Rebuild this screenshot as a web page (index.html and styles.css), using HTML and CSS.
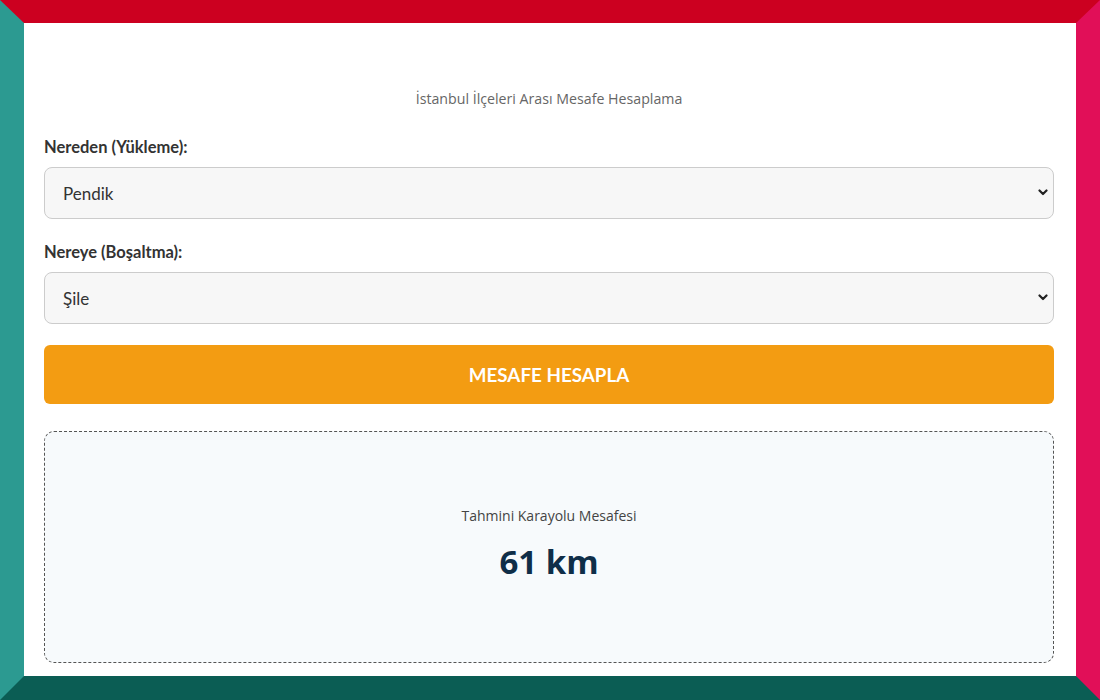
FILE: index.html
```html
<!DOCTYPE html>
<html lang="tr">
<head>
<meta charset="utf-8">
<title>İstanbul İlçeleri Arası Mesafe Hesaplama</title>
<link rel="stylesheet" href="styles.css">
</head>
<body>
<div class="frame">
  <div class="card">
    <p class="title">İstanbul İlçeleri Arası Mesafe Hesaplama</p>

    <label class="label" for="from">Nereden (Yükleme):</label>
    <div class="select-wrap">
      <select id="from" class="select">
        <option>Pendik</option>
      </select>
      <svg class="chevron" width="10" height="7" viewBox="0 0 10 7"><path d="M1.5 1.5 L5 5 L8.5 1.5" fill="none" stroke="#222" stroke-width="2.2" stroke-linecap="round" stroke-linejoin="round"/></svg>
    </div>

    <label class="label second" for="to">Nereye (Boşaltma):</label>
    <div class="select-wrap">
      <select id="to" class="select">
        <option>Şile</option>
      </select>
      <svg class="chevron" width="10" height="7" viewBox="0 0 10 7"><path d="M1.5 1.5 L5 5 L8.5 1.5" fill="none" stroke="#222" stroke-width="2.2" stroke-linecap="round" stroke-linejoin="round"/></svg>
    </div>

    <button class="btn" type="button">MESAFE HESAPLA</button>

    <div class="result">
      <div class="result-label">Tahmini Karayolu Mesafesi</div>
      <div class="result-value">61 km</div>
    </div>
  </div>
</div>
</body>
</html>
```

FILE: styles.css
```css
* { box-sizing: border-box; }
html, body { margin: 0; padding: 0; }
body { background: #fff; }

.frame {
  width: 1100px;
  height: 700px;
  border-top: 23px solid #cc0020;
  border-left: 24px solid #2c9a91;
  border-right: 24px solid #e10f58;
  border-bottom: 24px solid #0b5d54;
  background: #fff;
}

.card {
  height: 100%;
  padding: 66px 22px 13px 20px;
  display: flex;
  flex-direction: column;
}

.title {
  margin: 0;
  text-align: center;
  font-family: "Open Sans", sans-serif;
  font-size: 14.2px;
  line-height: 20px;
  color: #666;
}

.label {
  display: block;
  margin-top: 28px;
  margin-bottom: 10px;
  font-family: Lato, sans-serif;
  font-weight: 700;
  font-size: 16.5px;
  line-height: 20px;
  color: #333;
}
.label.second { margin-top: 23px; }

.select-wrap {
  position: relative;
}
.select {
  display: block;
  width: 100%;
  height: 52px;
  margin: 0;
  padding: 0 18px;
  appearance: none;
  -webkit-appearance: none;
  background: #f7f7f7;
  border: 1.5px solid #cccccc;
  border-radius: 8px;
  font-family: Lato, sans-serif;
  font-size: 17px;
  color: #333;
  outline: none;
}
.chevron {
  position: absolute;
  right: 6px;
  top: 22px;
}

.btn {
  display: block;
  width: 100%;
  height: 59px;
  margin-top: 21px;
  border: none;
  border-radius: 6px;
  background: #f39c12;
  color: #fff;
  font-family: Lato, sans-serif;
  font-weight: 700;
  font-size: 18.8px;
}

.result {
  margin-top: 27px;
  height: 232px;
  border: 1px dashed #555;
  border-radius: 10px;
  background: #f7fafc;
  display: flex;
  flex-direction: column;
  align-items: center;
  justify-content: center;
  padding-bottom: 6px;
}
.result-label {
  font-family: "Open Sans", sans-serif;
  font-size: 14px;
  line-height: 18px;
  color: #444;
}
.result-value {
  margin-top: 17px;
  font-family: "Open Sans", sans-serif;
  font-weight: 700;
  font-size: 33px;
  line-height: 40px;
  color: #0f2e48;
}
```
